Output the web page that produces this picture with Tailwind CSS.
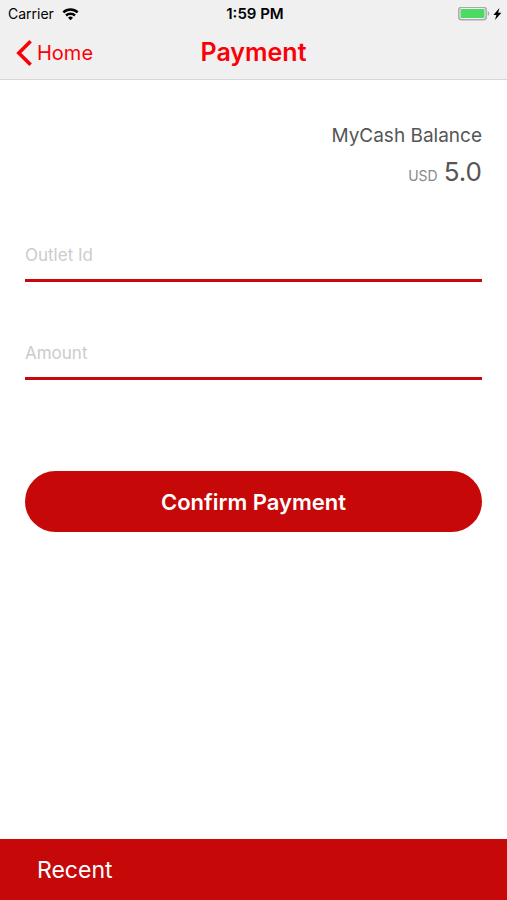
<!DOCTYPE html>
<html lang="en">
<head>
  <meta charset="UTF-8" />
  <meta name="viewport" content="width=device-width, initial-scale=1.0" />
  <title>Payment</title>
  <script src="https://cdn.jsdelivr.net/npm/@tailwindcss/browser@4"></script>
</head>
<body class="bg-white min-h-screen flex flex-col font-['Inter',sans-serif]">

<header class="bg-[#f0f0f0] border-b border-[#d6d6d6]">
  <!-- status bar -->
  <div class="grid grid-cols-3 items-center h-7 pl-2 pr-[5px] text-black">
    <div class="flex items-center gap-2">
      <span class="text-sm">Carrier</span>
      <svg class="w-[17px] h-[13px]" viewBox="0 0 18 14" fill="none" stroke="#000" stroke-width="2.7" aria-label="Wi-Fi">
        <path d="M1.3 4.8a11 11 0 0 1 15.4 0" />
        <path d="M4.2 8.1a6.9 6.9 0 0 1 9.6 0" />
        <path d="M9 13.1 6.3 10.4a3.9 3.9 0 0 1 5.4 0z" fill="#000" stroke="none" />
      </svg>
    </div>
    <div class="text-center text-[15px] font-semibold">1:59 PM</div>
    <div class="flex items-center justify-end gap-[3px]">
      <svg class="w-8 h-[14px]" viewBox="0 0 32 14" aria-label="Battery">
        <rect x=".8" y=".3" width="27.4" height="12.4" rx="2.8" fill="#f0f0f0" stroke="#aaa" stroke-width="1.5" />
        <rect x="2.5" y="2" width="24" height="9" rx="1" fill="#4cd964" />
        <path d="M29.8 4.2c2 .6 2 4 0 4.6z" fill="#aaa" />
      </svg>
      <svg class="w-[9px] h-3" viewBox="0 0 9 12" aria-label="Charging">
        <path d="M6.4 0 .4 6.9h3L2 12l6.4-7.3H5.2z" fill="#000" />
      </svg>
    </div>
  </div>

  <!-- navigation bar -->
  <nav class="grid grid-cols-[1fr_auto_1fr] items-center h-[51px] px-4 pb-[2px] text-[#fb0007]">
    <a href="#" class="flex items-center gap-1 text-xl">
      <svg class="w-[17px] h-7" viewBox="0 0 17 28" fill="none" stroke="currentColor" stroke-width="3.6" aria-hidden="true">
        <path d="M14.6 2.2 2.8 14l11.8 11.8" />
      </svg>
      Home
    </a>
    <h1 class="text-[25px] leading-8 pb-[2px] font-semibold">Payment</h1>
  </nav>
</header>

<main class="flex-grow px-[25px] pt-[42px]">
  <section class="text-right text-[#555]">
    <h2 class="text-[19px] leading-7">MyCash Balance</h2>
    <p class="mt-[2px] flex justify-end items-baseline gap-[6px] text-[26px] leading-10"><span class="text-sm text-[#888]">USD</span> 5.0</p>
  </section>

  <form>
    <input type="text" aria-label="Outlet Id" placeholder="Outlet Id" class="block w-full h-[50px] pb-[2px] mt-10 border-b-3 border-[#c60808] text-[17px] text-[#555] placeholder-[#ccc] outline-none" />
    <input type="text" inputmode="decimal" aria-label="Amount" placeholder="Amount" class="block w-full h-[50px] pb-[2px] mt-12 border-b-3 border-[#c60808] text-[17px] text-[#555] placeholder-[#ccc] outline-none" />
    <button type="button" class="block w-full h-[61px] mt-[91px] pt-[2px] rounded-full bg-[#c60808] text-[22px] font-semibold text-white">Confirm Payment</button>
  </form>
</main>

<footer class="bg-[#c60808]">
  <button type="button" class="block w-full h-[61px] px-[37px] pt-[2px] text-left text-[23px] text-white">Recent</button>
</footer>

</body>
</html>
